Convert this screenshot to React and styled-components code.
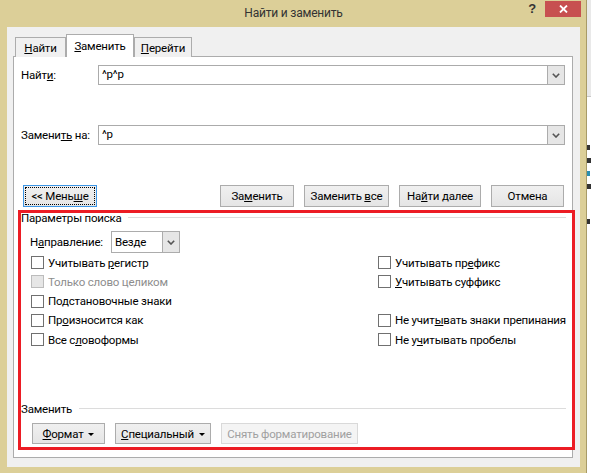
import React from "react";
import styled, { createGlobalStyle, css } from "styled-components";

const GlobalStyle = createGlobalStyle`
  html, body {
    margin: 0;
    padding: 0;
    background: #fff;
  }
  body {
    font-family: Roboto, "Liberation Sans", sans-serif;
    font-size: 11.5px;
    letter-spacing: -0.2px;
    color: #000;
  }
  * {
    box-sizing: border-box;
  }
`;

const Page = styled.div`
  display: flex;
  width: 591px;
  height: 473px;
  overflow: hidden;
  background: #fff;
`;

const Window = styled.div`
  width: 587px;
  flex-shrink: 0;
  display: flex;
  flex-direction: column;
  background: #dccf98;
  border-right: 1px solid #a89b67;
  padding: 0 6px 6px 7px;
`;

const TitleBar = styled.div`
  height: 27px;
  display: grid;
  grid-template-columns: 1fr auto 1fr;
  align-items: center;
`;

const Title = styled.div`
  grid-column: 2;
  color: #333;
  font-size: 12px;
  line-height: 14px;
  margin-top: -1px;
`;

const Controls = styled.div`
  grid-column: 3;
  justify-self: end;
  align-self: start;
  display: flex;
  align-items: flex-start;
  gap: 9px;
  margin-right: -1px;
`;

const Help = styled.span`
  font-family: "Liberation Sans", sans-serif;
  font-weight: bold;
  font-size: 13px;
  line-height: 13px;
  color: #333;
  margin-top: 2px;
`;

const CloseBtn = styled.div`
  width: 36px;
  height: 16px;
  margin-top: 1px;
  background: #c75050;
  display: flex;
  align-items: center;
  justify-content: center;
`;

const Body = styled.div`
  flex: 1;
  display: flex;
  flex-direction: column;
  background: #f0f0f0;
  padding: 7px 7px 9px 6px;
`;

const TabStrip = styled.div`
  display: flex;
  align-items: flex-end;
  height: 23px;
  padding-left: 2px;
  margin-bottom: -1px;
  position: relative;
  z-index: 1;
`;

const Tab = styled.div`
  width: ${(p) => p.$w}px;
  height: 20px;
  display: flex;
  align-items: center;
  justify-content: center;
  border: 1px solid #acacac;
  border-bottom: none;
  background: #f0f0f0;
  line-height: 14px;
  padding-top: 1px;
  ${(p) =>
    p.$active &&
    css`
      height: 23px;
      background: #fff;
      padding-bottom: 2px;
    `}
`;

const Panel = styled.div`
  flex: 1;
  display: flex;
  flex-direction: column;
  background: #fff;
  border: 1px solid #acacac;
  padding: 8px 7px 0 7px;
`;

const FieldRow = styled.div`
  display: flex;
  align-items: center;
  margin-top: ${(p) => p.$top || 0}px;
`;

const FieldLabel = styled.div`
  width: 77px;
  line-height: 14px;
`;

const Combo = styled.div`
  flex: 1;
  height: 20px;
  display: flex;
  border: 1px solid #ababab;
  background: #fff;
`;

const ComboText = styled.div`
  flex: 1;
  padding-left: 3px;
  line-height: 17px;
`;

const DropBtn = styled.div`
  width: 17px;
  display: flex;
  align-items: center;
  justify-content: center;
  background: #e6e6e6;
  border-left: 1px solid #acacac;
`;

const ButtonRow = styled.div`
  display: flex;
  align-items: center;
  gap: 10px;
  margin-top: 40px;
  padding-left: 2px;
`;

const Spacer = styled.div`
  flex: 1;
`;

const Button = styled.div`
  width: ${(p) => p.$w}px;
  height: ${(p) => p.$h || 22}px;
  display: flex;
  align-items: center;
  justify-content: center;
  gap: 5px;
  border: 1px solid #acacac;
  background: linear-gradient(#f0f0f0, #e5e5e5);
  line-height: 14px;
  white-space: nowrap;
  ${(p) =>
    p.$focus &&
    css`
      border-color: #3c96e6;
      outline: 1px dotted #000;
      outline-offset: -3px;
    `}
  ${(p) =>
    p.$disabled &&
    css`
      color: #a0a0a0;
      border-color: #d9d9d9;
      background: #f4f4f4;
    `}
`;

const Caret = styled.span`
  width: 0;
  height: 0;
  border-left: 3px solid transparent;
  border-right: 3px solid transparent;
  border-top: 3px solid #000;
  margin-top: 1px;
`;

const Highlight = styled.div`
  flex: 1;
  display: flex;
  flex-direction: column;
  border: 3px solid #ec1c24;
  margin: 3px -10px 7px -3px;
  padding-bottom: 3px;
`;

const GroupHeader = styled.div`
  display: flex;
  align-items: center;
  gap: ${(p) => p.$gap || 6}px;
  line-height: 12px;
  margin: ${(p) => p.$margin};
  &::after {
    content: "";
    flex: 1;
    height: 1px;
    margin-top: -1px;
    background: #dcdcdc;
  }
`;

const DirectionRow = styled.div`
  display: flex;
  align-items: center;
  margin-top: 7px;
  padding-left: 9px;
`;

const DirLabel = styled.div`
  width: 81px;
  line-height: 14px;
`;

const Select = styled.div`
  width: 69px;
  height: 22px;
  display: flex;
  border: 1px solid #acacac;
  background: #fff;
`;

const SelectText = styled.div`
  flex: 1;
  padding-left: 3px;
  line-height: 20px;
`;

const OptionGrid = styled.div`
  display: grid;
  grid-template-columns: 347px 1fr;
  grid-auto-rows: 19.25px;
  margin-left: 10px;
`;

const CheckItem = styled.label`
  display: flex;
  align-items: center;
  gap: 4px;
  line-height: 14px;
  white-space: nowrap;
  color: ${(p) => (p.$disabled ? "#8d8d8d" : "#000")};
`;

const Box = styled.span`
  width: 13px;
  height: 13px;
  flex-shrink: 0;
  border: 1px solid ${(p) => (p.$disabled ? "#bcbcbc" : "#707070")};
  background: ${(p) => (p.$disabled ? "#e6e6e6" : "#fff")};
`;

const BottomButtons = styled.div`
  display: flex;
  gap: 10px;
  padding-left: 11px;
`;

const Strip = styled.div`
  flex: 1;
  display: flex;
  flex-direction: column;
  overflow: hidden;
`;

const StripTop = styled.div`
  height: 97px;
  background: #e9e9e9;
  border-bottom: 1px solid #c8c8c8;
`;

const StripMarks = styled.div`
  display: flex;
  flex-direction: column;
  gap: 8px;
  padding-top: 48px;
`;

const Mark = styled.span`
  display: block;
  width: ${(p) => p.$w || 3}px;
  height: 5px;
  background: ${(p) => p.$c || "#333"};
  margin-top: ${(p) => p.$top || 0}px;
`;

const Chevron = () => (
  <svg width="8" height="5" viewBox="0 0 8 5">
    <polyline points="0.8,0.8 4,4 7.2,0.8" fill="none" stroke="#555" strokeWidth="1.6" />
  </svg>
);

const Check = ({ label, disabled }) => (
  <CheckItem $disabled={disabled}>
    <Box $disabled={disabled} />
    <span>{label}</span>
  </CheckItem>
);

export default function App() {
  return (
    <>
      <GlobalStyle />
      <Page>
        <Window>
          <TitleBar>
            <Title>Найти и заменить</Title>
            <Controls>
              <Help>?</Help>
              <CloseBtn>
                <svg width="9" height="8" viewBox="0 0 9 8">
                  <path d="M1 0.5 L8 7.5 M8 0.5 L1 7.5" stroke="#fff" strokeWidth="1.8" />
                </svg>
              </CloseBtn>
            </Controls>
          </TitleBar>
          <Body>
            <TabStrip>
              <Tab $w={51}>
                <span><u>Н</u>айти</span>
              </Tab>
              <Tab $w={68} $active>
                <span><u>З</u>аменить</span>
              </Tab>
              <Tab $w={58}>
                <span><u>П</u>ерейти</span>
              </Tab>
            </TabStrip>
            <Panel>
              <FieldRow>
                <FieldLabel>Найт<u>и</u>:</FieldLabel>
                <Combo>
                  <ComboText>^p^p</ComboText>
                  <DropBtn><Chevron /></DropBtn>
                </Combo>
              </FieldRow>
              <FieldRow $top={40}>
                <FieldLabel>Замени<u>ть</u> на:</FieldLabel>
                <Combo>
                  <ComboText>^p</ComboText>
                  <DropBtn><Chevron /></DropBtn>
                </Combo>
              </FieldRow>
              <ButtonRow>
                <Button $w={74} $focus><span>&lt;&lt; Мень<u>ш</u>е</span></Button>
                <Spacer />
                <Button $w={74}><span>За<u>м</u>енить</span></Button>
                <Button $w={85}><span>Заменить <u>в</u>се</span></Button>
                <Button $w={82}><span>На<u>й</u>ти далее</span></Button>
                <Button $w={73} style={{ marginRight: 1 }}><span>Отмена</span></Button>
              </ButtonRow>
              <Highlight>
                <GroupHeader $margin="-1px 6px 0 0">Параметры поиска</GroupHeader>
                <DirectionRow>
                  <DirLabel>Н<u>а</u>правление:</DirLabel>
                  <Select>
                    <SelectText>Везде</SelectText>
                    <DropBtn><Chevron /></DropBtn>
                  </Select>
                </DirectionRow>
                <OptionGrid>
                  <Check label={<>Учитывать <u>р</u>егистр</>} />
                  <Check label={<>Учитывать пр<u>е</u>фикс</>} />
                  <Check label="Только слово целиком" disabled />
                  <Check label={<><u>У</u>читывать суффикс</>} />
                  <Check label={<>По<u>д</u>становочные знаки</>} />
                  <span />
                  <Check label={<>Пр<u>о</u>износится как</>} />
                  <Check label={<>Не учит<u>ы</u>вать знаки препинания</>} />
                  <Check label={<>Все с<u>л</u>овоформы</>} />
                  <Check label={<>Не у<u>ч</u>итывать пробелы</>} />
                </OptionGrid>
                <Spacer />
                <GroupHeader $gap={7} $margin="0 6px 8px 0">Заменить</GroupHeader>
                <BottomButtons>
                  <Button $w={73} $h={21}>
                    <span><u>Ф</u>ормат</span>
                    <Caret />
                  </Button>
                  <Button $w={96} $h={21}>
                    <span><u>С</u>пециальный</span>
                    <Caret />
                  </Button>
                  <Button $w={137} $h={21} $disabled>
                    <span>Снять форматирование</span>
                  </Button>
                </BottomButtons>
              </Highlight>
            </Panel>
          </Body>
        </Window>
        <Strip>
          <StripTop />
          <StripMarks>
            <Mark />
            <Mark $w={4} />
            <Mark $c="#2a8fb0" />
            <Mark $w={4} />
            <Mark $top={22} />
          </StripMarks>
        </Strip>
      </Page>
    </>
  );
}
